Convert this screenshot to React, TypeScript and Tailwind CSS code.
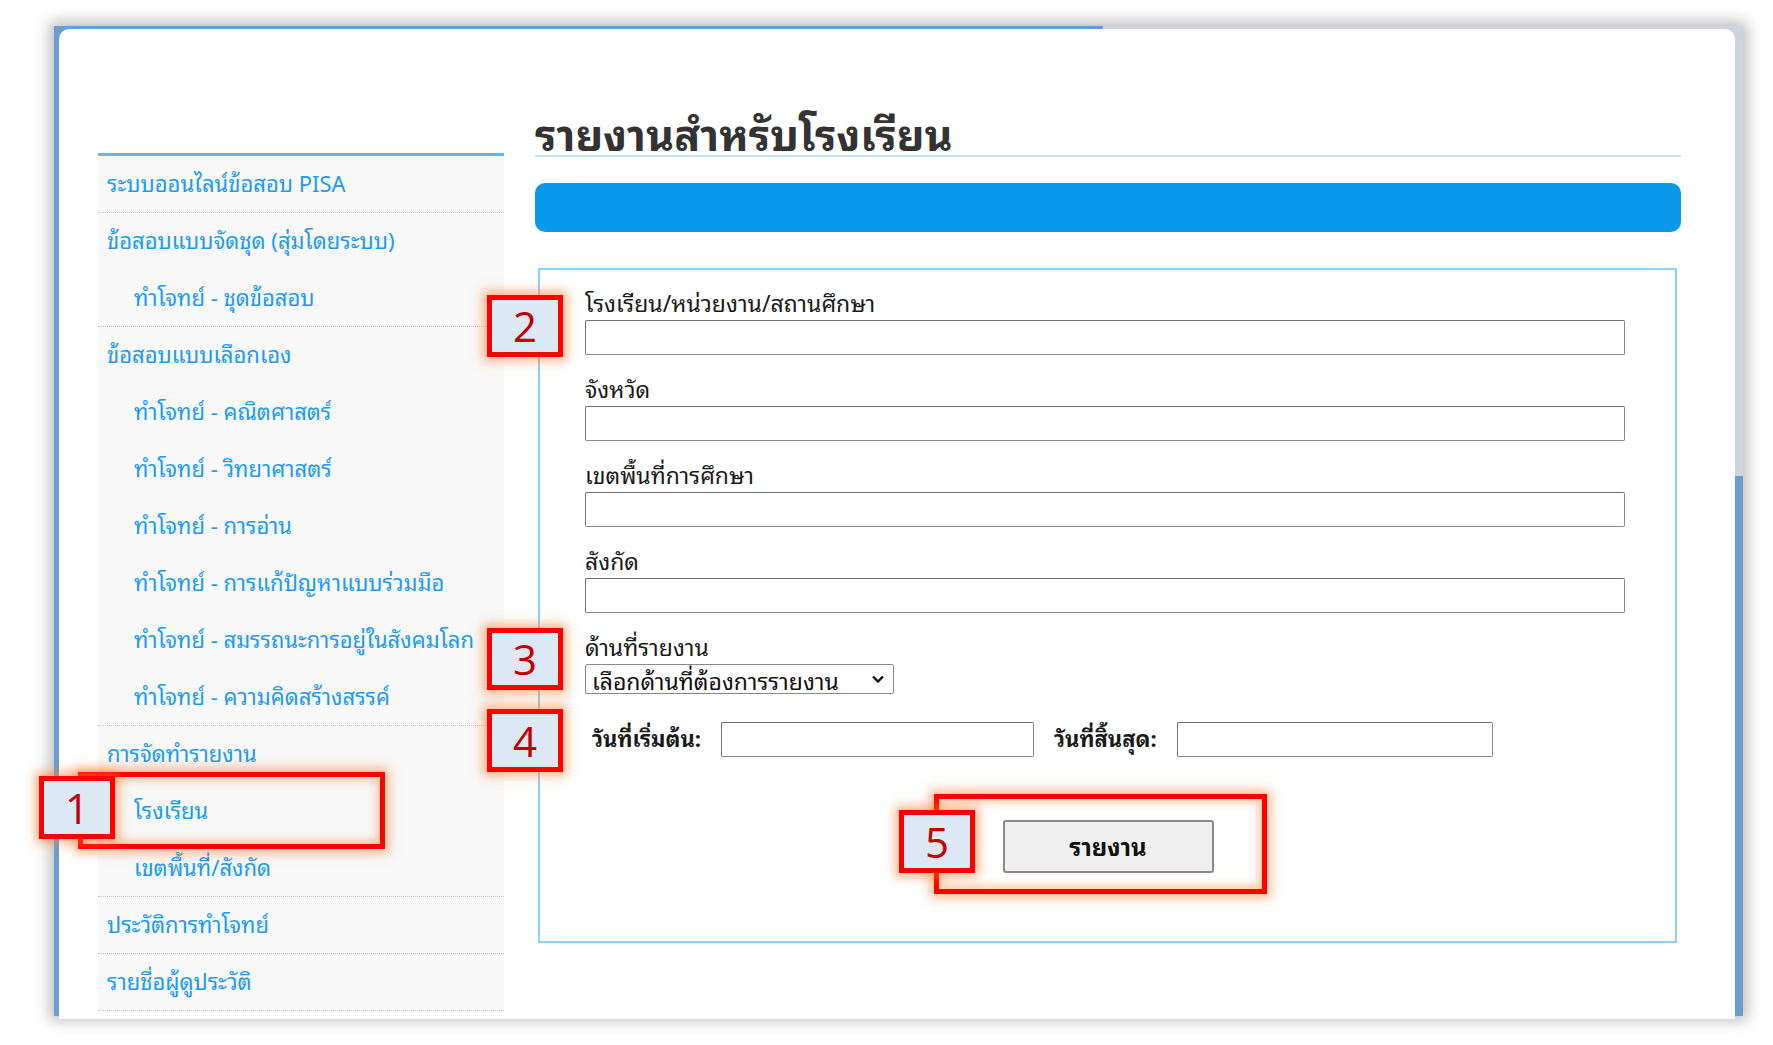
import React from "react";

const items: { t: string; sub?: boolean; sep?: boolean }[] = [
  { t: "ระบบออนไลน์ข้อสอบ PISA", sep: true },
  { t: "ข้อสอบแบบจัดชุด (สุ่มโดยระบบ)" },
  { t: "ทำโจทย์ - ชุดข้อสอบ", sub: true, sep: true },
  { t: "ข้อสอบแบบเลือกเอง" },
  { t: "ทำโจทย์ - คณิตศาสตร์", sub: true },
  { t: "ทำโจทย์ - วิทยาศาสตร์", sub: true },
  { t: "ทำโจทย์ - การอ่าน", sub: true },
  { t: "ทำโจทย์ - การแก้ปัญหาแบบร่วมมือ", sub: true },
  { t: "ทำโจทย์ - สมรรถนะการอยู่ในสังคมโลก", sub: true },
  { t: "ทำโจทย์ - ความคิดสร้างสรรค์", sub: true, sep: true },
  { t: "การจัดทำรายงาน" },
  { t: "โรงเรียน", sub: true },
  { t: "เขตพื้นที่/สังกัด", sub: true, sep: true },
  { t: "ประวัติการทำโจทย์", sep: true },
  { t: "รายชื่อผู้ดูประวัติ", sep: true },
];

const fields = ["โรงเรียน/หน่วยงาน/สถานศึกษา", "จังหวัด", "เขตพื้นที่การศึกษา", "สังกัด"];

function Badge({ n, cls }: { n: string; cls: string }) {
  return (
    <div
      className={`absolute z-30 flex items-center justify-center border-[5px] border-[#ff0000] bg-[#dde8f5] text-[42px] leading-none text-[#c00000] shadow-[0_0_10px_4px_rgba(255,120,40,0.55)] ${cls}`}
      style={{ fontFamily: "'Open Sans', 'Liberation Sans', sans-serif" }}
    >
      {n}
    </div>
  );
}

export default function App() {
  return (
    <div
      className="relative h-[1045px] w-[1773px] overflow-hidden bg-white"
      style={{
        fontFamily:
          "Tahoma, 'Leelawadee UI', 'Noto Sans Thai Looped', Loma, Garuda, Waree, Umpush, 'Noto Sans Thai', 'Noto Sans', 'DejaVu Sans', sans-serif",
      }}
    >
      {/* window frame */}
      <div className="relative ml-[54px] mt-[26px] h-[990px] w-[1689px] bg-[#6a9ecf] shadow-[0_0_14px_4px_rgba(0,0,0,0.28)]">
        <div className="absolute right-0 top-0 h-[450px] w-[640px] bg-[#cdd5de]" />
        <div className="relative z-10 ml-[5px] mr-[8px] h-[990px] translate-y-[3px] rounded-t-[10px] bg-white pt-[80px]">
          <div className="flex items-start">
            {/* sidebar */}
            <div className="ml-[39px] mt-[44px] w-[406px] border-t-[3px] border-[#5cb9f3] bg-[#f8f8f8]">
              {items.map((it, i) => (
                <div
                  key={i}
                  className={`flex h-[57px] items-center whitespace-nowrap pb-[4px] text-[22px] leading-[1.2] text-[#1b9bf1] ${it.sub ? "pl-[36px]" : "pl-[9px]"} ${it.sep ? "border-b border-dotted border-[#c4c4c4]" : ""}`}
                >
                  {it.t}
                </div>
              ))}
            </div>

            {/* main */}
            <div className="ml-[31px] w-[1146px]">
              <div className="flex h-[48px] items-end whitespace-nowrap border-b-2 border-[#c6e7fb] pb-[2px] text-[43px] font-bold leading-none text-[#333333]">
                รายงานสำหรับโรงเรียน
              </div>
              <div className="mt-[26px] h-[49px] rounded-[10px] bg-[#0b99ea]" />
              <div className="ml-[3px] mt-[36px] h-[675px] w-[1139px] border-2 border-[#8dd0f6] pl-[45px] pt-[20px]">
                {fields.map((f) => (
                  <div key={f} className="mb-[21px]">
                    <div className="flex h-[28px] items-center whitespace-nowrap pb-[4px] text-[23px] leading-[1.2] text-[#1a1a1a]">{f}</div>
                    <div className="mt-[2px] h-[35px] w-[1040px] rounded-[2px] border border-[#8a8a8a] border-l-[#6f6f6f] border-t-[#6f6f6f] bg-white" />
                  </div>
                ))}
                <div className="flex h-[28px] items-center pb-[4px] text-[23px] leading-[1.2] text-[#1a1a1a]">ด้านที่รายงาน</div>
                <div className="mt-[2px] flex h-[30px] w-[309px] items-center justify-between rounded-[2px] border border-[#8a8a8a] bg-white pl-[6px] pr-[8px] text-[23px] leading-none text-[#111]">
                  <span className="whitespace-nowrap">เลือกด้านที่ต้องการรายงาน</span>
                  <svg width="14" height="10" viewBox="0 0 14 10">
                    <path d="M2 2.5 L7 7.5 L12 2.5" fill="none" stroke="#111" strokeWidth="2.4" />
                  </svg>
                </div>
                <div className="mt-[28px] flex h-[35px] items-center whitespace-nowrap text-[22px] font-bold leading-[1.2] text-[#1a1a1a]">
                  <span className="ml-[7px] w-[129px] pb-[5px]">วันที่เริ่มต้น:</span>
                  <div className="h-[35px] w-[313px] rounded-[2px] border border-[#8a8a8a] border-l-[#6f6f6f] border-t-[#6f6f6f] bg-white" />
                  <span className="ml-[20px] w-[123px] pb-[5px]">วันที่สิ้นสุด:</span>
                  <div className="h-[35px] w-[316px] rounded-[2px] border border-[#8a8a8a] border-l-[#6f6f6f] border-t-[#6f6f6f] bg-white" />
                </div>
                <div className="mt-[63px] flex justify-center pr-[44px]">
                  <button className="flex h-[53px] w-[211px] items-center justify-center rounded-[3px] border-2 border-[#8a8a8a] bg-[#efefef] pb-[3px] text-[24px] font-bold leading-[1.2] text-[#111]">
                    รายงาน
                  </button>
                </div>
              </div>
            </div>
          </div>
        </div>
      </div>

      {/* annotations */}
      <div className="absolute left-[78px] top-[772px] z-20 h-[77px] w-[307px] border-[5px] border-[#ff0000] shadow-[0_0_10px_4px_rgba(255,120,40,0.5),inset_0_0_10px_3px_rgba(255,120,40,0.45)]" />
      <div className="absolute left-[934px] top-[794px] z-20 h-[100px] w-[333px] border-[5px] border-[#ff0000] shadow-[0_0_10px_4px_rgba(255,120,40,0.5),inset_0_0_10px_3px_rgba(255,120,40,0.45)]" />
      <Badge n="1" cls="left-[39px] top-[776px] h-[63px] w-[76px]" />
      <Badge n="2" cls="left-[487px] top-[295px] h-[62px] w-[76px]" />
      <Badge n="3" cls="left-[487px] top-[628px] h-[62px] w-[76px]" />
      <Badge n="4" cls="left-[487px] top-[709px] h-[63px] w-[76px]" />
      <Badge n="5" cls="left-[899px] top-[810px] h-[63px] w-[76px]" />
    </div>
  );
}
